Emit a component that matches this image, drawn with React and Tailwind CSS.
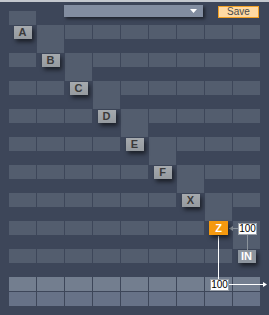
const letters = ["A", "B", "C", "D", "E", "F", "X", "Z", "IN"];

function Key({ label }) {
  if (label === "Z") {
    return (
      <div className="relative z-10 w-[19px] h-[14px] flex items-center justify-center bg-[#f5990f] text-white text-[11px] font-bold leading-none shadow-[2px_3px_4px_rgba(0,0,0,0.55)]">
        Z
      </div>
    );
  }
  if (label === "IN") {
    return (
      <div className="relative z-10 w-[18px] h-[13px] flex items-center justify-center bg-[#8d959e] text-white text-[11px] font-bold leading-none shadow-[2px_3px_4px_rgba(0,0,0,0.55)]">
        IN
      </div>
    );
  }
  return (
    <div className="relative z-10 w-[18px] h-[13px] flex items-center justify-center bg-gradient-to-b from-[#a6aaae] to-[#959a9f] text-[#3a3a3a] text-[11px] font-bold leading-none shadow-[2px_3px_4px_rgba(0,0,0,0.55)]">
      {label}
    </div>
  );
}

function Row({ active, label }) {
  // band row: every column lit except the one holding the key
  // lead row: only the key's column is lit
  return (
    <div className="grid grid-cols-[repeat(9,27px)] gap-x-px h-[14px]">
      {letters.map((_, c) => {
        if (label) {
          if (c === active) {
            return (
              <div key={c} className="flex items-center justify-center">
                <Key label={label} />
              </div>
            );
          }
          return <div key={c} className="bg-[#535d6e]" />;
        }
        return <div key={c} className={c === active ? "bg-[#535d6e]" : ""} />;
      })}
    </div>
  );
}

export default function App() {
  return (
    <div
      className="relative w-[269px] h-[315px] overflow-hidden bg-[#3d4659]"
      style={{ fontFamily: '"Liberation Sans", Arial, sans-serif' }}
    >
      <div className="h-[2px] bg-[#c4c8ce]" />

      <div className="pl-[9px] pt-[9px] flex flex-col">
        {letters.map((l, i) => (
          <div key={l}>
            <Row active={i} />
            <Row active={i} label={l} />
          </div>
        ))}
      </div>

      <div className="ml-[9px] mt-[14px] grid grid-cols-[repeat(9,27px)] gap-px w-[251px]">
        {letters.map((l) => (
          <div key={"a" + l} className="h-[14px] bg-[#737e8f]" />
        ))}
        {letters.map((l) => (
          <div key={"b" + l} className="h-[14px] bg-[#677287]" />
        ))}
      </div>

      {/* toolbar */}
      <div className="absolute left-[64px] top-[5px] w-[139px] h-[12px] bg-[#828da0] shadow-[2px_2px_3px_rgba(0,0,0,0.5)] flex items-center justify-end pr-[6px]">
        <svg width="7" height="4" viewBox="0 0 7 4">
          <polygon points="0,0 7,0 3.5,4" fill="#fff" />
        </svg>
      </div>
      <div className="absolute left-[218px] top-[6px] w-[41px] h-[12px] border border-[#f2a024] bg-[#ffd9a3] flex items-center justify-center text-[10px] leading-none text-[#4a4a4a]">
        Save
      </div>

      {/* connectors */}
      <svg className="absolute inset-0 pointer-events-none" width="269" height="315">
        <line x1="229" y1="228.5" x2="238" y2="228.5" stroke="#8c949c" />
        <polygon points="229,228.5 233,226 233,231" fill="#8c949c" />
        <line x1="247.5" y1="235" x2="247.5" y2="250" stroke="#8c949c" />
        <line x1="218.5" y1="236" x2="218.5" y2="279" stroke="#fff" />
        <line x1="229" y1="284.5" x2="264" y2="284.5" stroke="#fff" />
        <polygon points="267,284.5 263,282 263,287" fill="#fff" />
      </svg>

      <div className="absolute left-[238px] top-[223px] w-[19px] h-[12px] bg-white border border-[#9aa0a8] flex items-center justify-center text-[10px] leading-none text-black">
        100
      </div>
      <div className="absolute left-[210px] top-[279px] w-[19px] h-[12px] bg-white border border-[#9aa0a8] flex items-center justify-center text-[10px] leading-none text-black">
        100
      </div>
    </div>
  );
}
